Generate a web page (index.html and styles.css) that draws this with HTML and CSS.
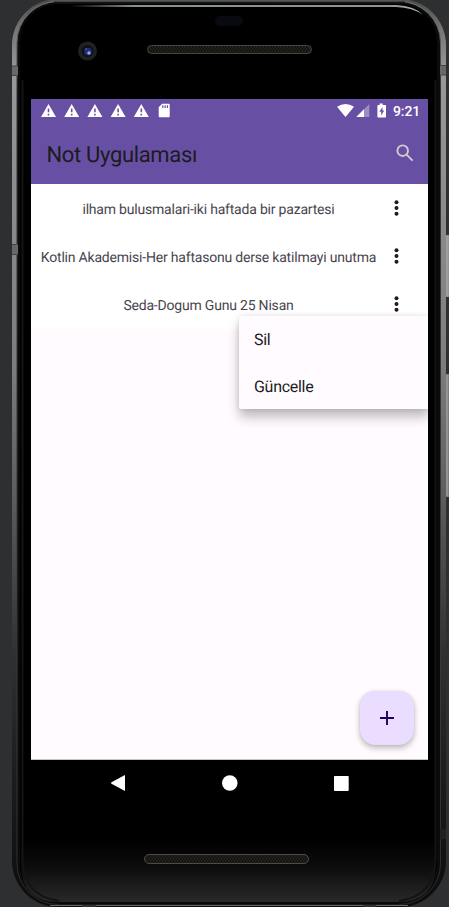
FILE: index.html
```html
<!DOCTYPE html>
<html lang="tr">
<head>
<meta charset="utf-8">
<title>Not Uygulaması</title>
<link rel="stylesheet" href="styles.css">
</head>
<body>
<div class="device">
  <svg class="shell" width="449" height="907" viewBox="0 0 449 907" aria-hidden="true">
    <defs>
      <linearGradient id="metal" x1="0" y1="0" x2="0" y2="1">
        <stop offset="0" stop-color="#4b4c4c"/><stop offset=".035" stop-color="#777"/><stop offset=".08" stop-color="#979898"/>
        <stop offset=".4" stop-color="#7c7d7d"/><stop offset=".55" stop-color="#5b5c5d"/>
        <stop offset=".72" stop-color="#303132"/><stop offset=".85" stop-color="#1c1d1e"/><stop offset="1" stop-color="#0c0c0c"/>
      </linearGradient>
      <linearGradient id="inner" x1="0" y1="0" x2="0" y2="1">
        <stop offset="0" stop-color="#777"/><stop offset=".1" stop-color="#333"/><stop offset=".8" stop-color="#383838"/><stop offset="1" stop-color="#2c2c2c"/>
      </linearGradient>
      <linearGradient id="glow" x1="0" y1="0" x2="0" y2="1">
        <stop offset="0" stop-color="#000"/><stop offset=".45" stop-color="#0d0d0d"/><stop offset="1" stop-color="#292929"/>
      </linearGradient>
      <linearGradient id="shine" x1="0" y1="0" x2="1" y2="0">
        <stop offset="0" stop-color="#000"/><stop offset=".18" stop-color="#879092"/><stop offset=".9" stop-color="#8c9496"/><stop offset="1" stop-color="#bbb"/>
      </linearGradient>
      <pattern id="mesh" width="3" height="4" patternUnits="userSpaceOnUse">
        <rect width="3" height="4" fill="#12110e"/><path d="M0 1h1.5M1.5 3H3" stroke="#36342d"/>
      </pattern>
    </defs>
    <path d="M446 235h3v62h-3z" fill="#929292"/><path d="M446 374h3v123h-3z" fill="#7d7d7d"/>
    <path d="M447 236v60M447 375v121" stroke="#aaa"/>
    <rect x="12" y="-1" width="434" height="908" rx="46" fill="url(#metal)"/>
    <rect x="17" y="1.500" width="423.500" height="903" rx="41" fill="#0b0b0b" stroke="url(#inner)"/>
    <path d="M12 66h6v10h-6zM440 65h6v10h-6zM12 244h6v11h-6z" fill="#686868"/>
    <path d="M440 829h6v10h-6z" fill="#202122"/>
    <path d="M12 66h6M12 75.500h6M440 65.500h6M440 75h6M12 244.500h6M12 254.500h6" stroke="#444"/>
    <rect x="20" y="4" width="417" height="898" rx="38" fill="#000"/>
    <path d="M21 840H436V864Q436 902 398 902H59Q21 902 21 864Z" fill="url(#glow)"/>
    <path d="M22.500 80V858Q23 896 59 901M435.500 80V858Q435 896 399 901" fill="none" stroke="#141414" stroke-width="2"/>
    <path d="M58 903.500H399" stroke="#080808" stroke-width="2"/><path d="M50 905.500H408" stroke="#686565"/>
    <path d="M82 905h14v2H82zM363 905h13v2h-13z" fill="#303030"/>
    <path d="M50 .500H410" stroke="#565656"/><path d="M54 2.500H405" stroke="#151515" stroke-width="2"/>
    <path d="M70 5H396Q415 6 423 15Q413 7.500 396 7H70Z" fill="url(#shine)"/>
    <rect x="215" y="16" width="28" height="10" rx="5" fill="#090a10"/>
    <circle cx="87.500" cy="51" r="9.500" fill="#202122"/><circle cx="87.500" cy="51" r="6" fill="#101116"/>
    <circle cx="88" cy="51.500" r="3.700" fill="#202f75"/><circle cx="89" cy="53" r="1.700" fill="#91a6f0"/><circle cx="86" cy="49" r=".7" fill="#647bd6"/>
    <rect x="147.500" y="45.500" width="164" height="8" rx="4" fill="url(#mesh)" stroke="#464542"/>
    <rect x="144.500" y="854.500" width="164" height="9" rx="4.500" fill="url(#mesh)" stroke="#4c4b48"/>
  </svg>

  <main class="screen">
    <header class="top">
      <div class="status">
        <svg class="notices" width="132" height="16" viewBox="0 0 132 16" fill="#fff">
          <defs><path id="warn" fill-rule="evenodd" d="M7.500 1 15 14H0ZM6.700 5.500V9.300H8.300V5.500ZM6.700 10.800V12.400H8.300V10.800Z"/></defs>
          <use href="#warn"/><use href="#warn" x="23.200"/><use href="#warn" x="46.400"/><use href="#warn" x="69.600"/><use href="#warn" x="92.800"/>
          <path fill-rule="evenodd" d="M121.200.8h6.500q1 0 1 1v11.500q0 1-1 1h-9q-1 0-1-1V4.300ZM121.200 2.300V5H122.400V2.300ZM123.500 2.300V5H124.700V2.300ZM125.800 2.300V5H127V2.300Z"/>
        </svg>
        <svg class="signals" width="50" height="16" viewBox="0 0 50 16" fill="#fff">
          <path d="M0 3.700Q8.500-1.700 17 3.700L8.500 14Z"/>
          <path d="M32.300 1V14H19.300Z" opacity=".35"/><path d="M27 6.300V14H19.300Z"/>
          <path fill-rule="evenodd" d="M42.700.5h3V2H48.200q.8 0 .8.800V13.700q0 .8-.8.800H41.200q-.8 0-.8-.8V2.800Q40.400 2 41.200 2h1.500ZM45.500 4 42.400 8.800H44.200V12.500L47.200 7.600H45.500Z"/>
        </svg>
        <span class="clock">9:21</span>
      </div>
      <div class="toolbar">
        <h1>Not Uygulaması</h1>
        <svg width="18" height="18" viewBox="0 0 18 18" fill="none" stroke="#d5cace" stroke-width="1.900"><circle cx="6.700" cy="6.700" r="5.300"/><path d="m10.600 10.600 6 6"/></svg>
      </div>
    </header>
    <ul class="notes">
      <li><span>ilham bulusmalari-iki haftada bir pazartesi</span><svg class="more" width="5" height="16" viewBox="0 0 5 16"><circle cx="2.500" cy="2.200" r="2"/><circle cx="2.500" cy="8" r="2"/><circle cx="2.500" cy="13.800" r="2"/></svg></li>
      <li><span>Kotlin Akademisi-Her haftasonu derse katilmayi unutma</span><svg class="more" width="5" height="16" viewBox="0 0 5 16"><circle cx="2.500" cy="2.200" r="2"/><circle cx="2.500" cy="8" r="2"/><circle cx="2.500" cy="13.800" r="2"/></svg></li>
      <li><span>Seda-Dogum Gunu 25 Nisan</span><svg class="more" width="5" height="16" viewBox="0 0 5 16"><circle cx="2.500" cy="2.200" r="2"/><circle cx="2.500" cy="8" r="2"/><circle cx="2.500" cy="13.800" r="2"/></svg></li>
    </ul>
    <div class="menu"><div>Sil</div><div>Güncelle</div></div>
    <button class="fab" aria-label="Not ekle"><svg width="14" height="14" viewBox="0 0 14 14" stroke="#21005d" stroke-width="1.900"><path d="M0 7H14M7 0V14"/></svg></button>
  </main>
  <nav class="navbar">
    <svg width="15" height="16" viewBox="0 0 15 16" fill="#fff"><path d="M14 0V16L.5 8.800Q-.3 8 .5 7.200Z"/></svg>
    <svg width="16" height="16" viewBox="0 0 16 16" fill="#fff"><circle cx="7.800" cy="8" r="7.800"/></svg>
    <svg width="15" height="15" viewBox="0 0 15 15" fill="#fff"><rect width="14.700" height="15" rx=".7"/></svg>
  </nav>
</div>
</body>
</html>
```
FILE: styles.css
```css
* { box-sizing: border-box; }
body { margin: 0; background: #2e2f31; font-family: Roboto, sans-serif; overflow: hidden; text-rendering: geometricPrecision; }
.device { position: relative; width: 449px; height: 907px; padding: 99px 21px 0 31px; }
.shell { position: absolute; inset: 0; }
svg { display: block; flex: none; }
.screen { position: relative; height: 661px; overflow: hidden; background: #fffbfe; border-bottom: 1px solid #bec9c4; }
.top { height: 85px; background: #6750a4; }
.status { height: 24px; display: flex; align-items: flex-start; padding: 4px 8px 0 9.500px; }
.signals { margin-left: auto; margin-right: 6px; }
.clock { font-size: 14px; line-height: 17px; padding-top: 1px; letter-spacing: -.15px; font-weight: 500; color: #fff; }
.toolbar { height: 61px; display: flex; align-items: center; justify-content: space-between; padding: 0 14.500px 0 15.500px; }
h1 { margin: 5px 0 0; font-size: 22px; line-height: 28px; letter-spacing: -.34px; font-weight: 400; color: #1c1b1f; }
.toolbar svg { margin-bottom: 2px; }
.notes { list-style: none; margin: 0; padding: 0; }
.notes li { height: 48.200px; display: flex; align-items: center; background: #fff; border-radius: 2px; }
.notes span { width: 355px; text-align: center; font-size: 14px; letter-spacing: -.2px; line-height: 18px; color: #49454f; white-space: nowrap; padding-top: 3px; }
.more { margin-left: 8.400px; fill: #24191c; }
.menu { position: absolute; left: 208px; top: 217px; width: 190px; height: 93px; background: #fffbfe; border-radius: 2px; box-shadow: 0 8px 12px rgba(0,0,0,.26), 0 0 5px rgba(0,0,0,.1); }
.menu div { height: 46.500px; padding: 1px 0 0 15px; font-size: 16px; letter-spacing: -.28px; line-height: 46px; color: #1c1b1f; }
.fab { position: absolute; left: 328.500px; top: 592px; width: 54px; height: 54px; padding: 0; border: 0; border-radius: 15.500px; background: #eaddff; display: grid; place-items: center; box-shadow: 0 3px 6px rgba(0,0,0,.27), 0 0 2px rgba(0,0,0,.1); }
.navbar { position: relative; height: 46px; display: flex; align-items: center; justify-content: space-between; padding: 0 79px 0 80px; }
```
